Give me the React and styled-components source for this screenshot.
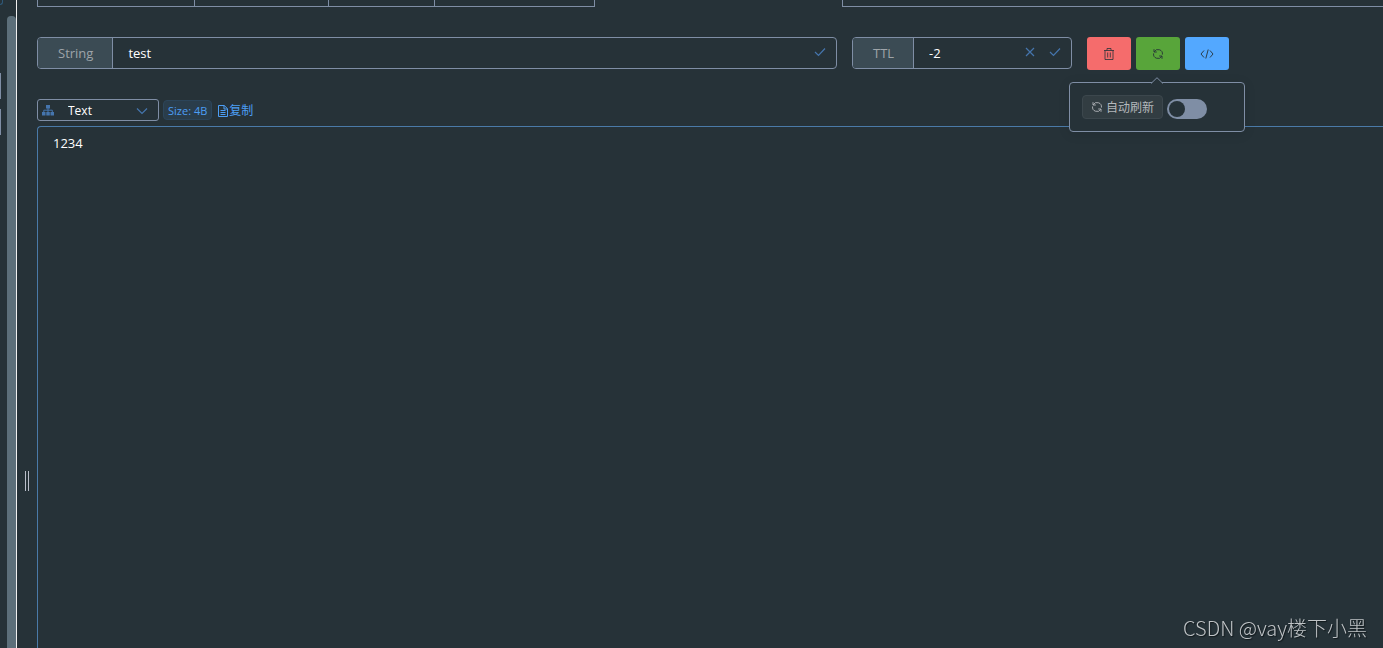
import React, { useState } from "react";
import styled, { createGlobalStyle } from "styled-components";

const GlobalStyle = createGlobalStyle`
  * {
    box-sizing: border-box;
  }

  html,
  body,
  #root {
    height: 100%;
  }

  body {
    margin: 0;
    overflow: hidden;
    background: #263238;
    color: #f3f3f4;
    font-family: "Open Sans", "Noto Sans", "Noto Sans CJK SC", sans-serif;
    font-size: 14px;
  }

  button,
  input,
  select,
  textarea {
    font-family: inherit;
    margin: 0;
  }
`;

const Page = styled.div`
  display: flex;
  height: 100%;
`;

const Sidebar = styled.aside`
  display: flex;
  justify-content: space-between;
  flex: none;
  width: 17px;
  border-right: 1px solid #f0f0f0;
`;

const SidebarEdge = styled.div`
  display: flex;
  flex-direction: column;
  gap: 10px;
  width: 3px;
`;

const EdgeTag = styled.div`
  height: 5px;
  margin-bottom: 58px;
  border: 1px solid #2e5878;
  border-width: 0 1px 1px 0;
  border-bottom-right-radius: 4px;
`;

const EdgeButton = styled.div`
  width: 1px;
  height: 26px;
  background: #7f8ea5;
`;

const ScrollThumb = styled.div`
  width: 9px;
  margin-top: 16px;
  border-radius: 4px 4px 0 0;
  background: #5c6f7a;
`;

const DragHandle = styled.div`
  flex: none;
  align-self: flex-end;
  width: 4px;
  height: 20px;
  margin: 0 8px 157px 8px;
  border: 1px solid #b9bec9;
  border-width: 0 1px;
`;

const Main = styled.main`
  flex: 1;
  min-width: 0;
  display: flex;
  flex-direction: column;
`;

const Tabs = styled.div`
  display: flex;
  height: 7px;
`;

const Tab = styled.div`
  width: ${(props) => props.$width}px;
  border: 1px solid #7f8ea5;
  border-width: 0 1px 1px 0;

  &:first-child {
    border-left-width: 1px;
  }
`;

const TabPanel = styled.div`
  flex: 1;
  margin-left: 247px;
  border: 1px solid #7f8ea5;
  border-width: 0 0 1px 1px;
`;

const KeyHeader = styled.header`
  display: flex;
  align-items: flex-start;
  gap: 15px;
  margin-top: 30px;
  padding-right: 154px;
`;

const InputGroup = styled.div`
  display: flex;
  align-items: center;
  flex: ${(props) => (props.$fixed ? "none" : "1")};
  width: ${(props) => (props.$fixed ? "220px" : "auto")};
  height: 32px;
  border: 1px solid #7f8ea5;
  border-radius: 4px;
  overflow: hidden;
`;

const InputLabel = styled.label`
  display: flex;
  align-items: center;
  height: 100%;
  padding: 0 19px 0 20px;
  border-right: 1px solid #7f8ea5;
  background: #3b4b54;
  color: #9ea4a9;
  font-size: 13px;
`;

const Input = styled.input`
  flex: 1;
  min-width: 0;
  height: 100%;
  padding: 0 15px;
  border: none;
  outline: none;
  background: transparent;
  color: #ffffff;
  font-size: 13px;
`;

const IconButton = styled.button`
  display: flex;
  align-items: center;
  justify-content: center;
  width: 25px;
  height: 30px;
  padding: 0 0 2px;
  border: none;
  background: transparent;
  color: #4575ad;

  &:last-child {
    margin-right: 4px;
  }
`;

const Actions = styled.div`
  display: flex;
  gap: 5px;
`;

const ActionButton = styled.button`
  display: flex;
  align-items: center;
  justify-content: center;
  width: 44px;
  height: 33px;
  padding: 0;
  border: none;
  border-radius: 3px;
  background: ${(props) => props.$color};
  color: #263238;
`;

const RefreshWrap = styled.div`
  position: relative;
`;

const Popover = styled.div`
  position: absolute;
  z-index: 2;
  top: 45px;
  left: -67px;
  display: flex;
  align-items: flex-start;
  gap: 4px;
  width: 176px;
  height: 50px;
  padding: 12px;
  border: 1px solid #7f8ea5;
  border-radius: 4px;
  background: #263238;
  box-shadow: 0 2px 12px rgba(0, 0, 0, 0.1);
`;

const Arrow = styled.svg`
  position: absolute;
  top: -6px;
  left: 81px;
`;

const RefreshTag = styled.label`
  display: flex;
  align-items: center;
  gap: 3px;
  height: 24px;
  padding: 0 8px;
  border: 1px solid #3c474d;
  border-radius: 4px;
  background: #323d42;
  color: #b4b8bc;
  font-size: 12px;
  white-space: nowrap;
`;

const Switch = styled.input`
  appearance: none;
  width: 40px;
  height: 20px;
  margin-top: 4px;
  border-radius: 10px;
  background: #7f8ea5;

  &::before {
    content: "";
    display: block;
    width: 16px;
    height: 16px;
    margin: 2px;
    border-radius: 50%;
    background: #263238;
  }

  &:checked::before {
    margin-left: 22px;
  }
`;

const FormatBar = styled.div`
  display: flex;
  align-items: center;
  gap: 4px;
  height: 22px;
  margin-top: 29px;
`;

const SelectBox = styled.div`
  display: flex;
  align-items: center;
  width: 122px;
  height: 22px;
  padding: 0 10px 0 4px;
  border: 1px solid #7f8ea5;
  border-radius: 3px;
  color: #4575ad;
`;

const Select = styled.select`
  flex: 1;
  appearance: none;
  padding: 0 0 0 14px;
  border: none;
  outline: none;
  background: transparent;
  color: #ffffff;
  font-size: 12px;
`;

const SizeTag = styled.span`
  height: 20px;
  padding: 0 4px;
  border: 1px solid #2c455a;
  border-radius: 4px;
  background: #2a3d4b;
  color: #4c9ef5;
  font-size: 11px;
  line-height: 19px;
`;

const CopyLink = styled.a`
  display: flex;
  align-items: center;
  gap: 1px;
  padding: 2px 0 0 2px;
  color: #4c9ef5;
  font-size: 12px;
  line-height: 20px;
  text-decoration: none;
`;

const ValueBox = styled.textarea`
  flex: 1;
  display: block;
  margin-top: 5px;
  padding: 6px 15px;
  border: 1px solid #4a7aa8;
  border-width: 1px 0 0 1px;
  border-top-left-radius: 4px;
  outline: none;
  resize: none;
  background: transparent;
  color: #ffffff;
  font-size: 13px;
  line-height: 20px;
`;

const Watermark = styled.div`
  position: fixed;
  right: 16px;
  bottom: 6px;
  color: #bfc3c6;
  font-family: "Noto Sans CJK SC", sans-serif;
  font-size: 20px;
  font-weight: 300;
  line-height: 28px;
  text-shadow: 1px 1px 1px #11181b;
`;

const CheckIcon = () => (
  <svg width="12" height="10" viewBox="0 0 12 10" fill="none" stroke="currentColor" strokeWidth="1.2">
    <path d="M1 5l3.5 3.5L11 1.5" />
  </svg>
);

const CloseIcon = () => (
  <svg width="10" height="10" viewBox="0 0 10 10" fill="none" stroke="currentColor" strokeWidth="1.2">
    <path d="M1 1l8 8M9 1L1 9" />
  </svg>
);

const TrashIcon = () => (
  <svg width="12" height="12" viewBox="0 0 12 12" fill="none" stroke="currentColor" strokeWidth="0.8">
    <path d="M1 2.5h10M4 2.5v-2h4v2M2 2.5v9h8v-9M4.7 4.5v5M7.3 4.5v5" />
  </svg>
);

const RefreshIcon = () => (
  <svg width="12" height="12" viewBox="0 0 12 12" fill="none" stroke="currentColor" strokeWidth="0.9">
    <path d="M2.2 3.8A4.4 4.4 0 0 1 10.4 6.6M9.8 8.2A4.4 4.4 0 0 1 1.6 5.4" />
    <path d="M2 1.2V4h2.8M10 10.8V8H7.2" />
  </svg>
);

const CodeIcon = () => (
  <svg width="14" height="12" viewBox="0 0 14 12" fill="none" stroke="currentColor" strokeWidth="0.9">
    <path d="M4 2.5L1 6l3 3.5M10 2.5L13 6l-3 3.5M8.2 1.5l-2.4 9" />
  </svg>
);

const SitemapIcon = () => (
  <svg width="12" height="11" viewBox="0 0 12 11" fill="currentColor">
    <path d="M4 0h4v3.5H4zM0 7h3.5v3.5H0zM4.3 7h3.5v3.5H4.3zM8.5 7H12v3.5H8.5z" />
    <path d="M6 3v4M1.8 7V5.2h8.5V7" fill="none" stroke="currentColor" />
  </svg>
);

const ArrowDownIcon = () => (
  <svg width="12" height="10" viewBox="0 0 12 10" fill="none" stroke="currentColor" strokeWidth="1.2">
    <path d="M1 3.5l5 5 5-5" />
  </svg>
);

const FileIcon = () => (
  <svg width="10" height="12" viewBox="0 0 10 12" fill="none" stroke="currentColor">
    <path d="M.5.5h5.7l3.3 3.2v7.8h-9zM6 .5V4h3.5M2.5 5.5h5M2.5 7.5h5M2.5 9.5h5" />
  </svg>
);

function App() {
  const [name, setName] = useState("test");
  const [ttl, setTtl] = useState("-2");
  const [value, setValue] = useState("1234");
  const [autoRefresh, setAutoRefresh] = useState(false);

  return (
    <>
      <GlobalStyle />
      <Page>
        <Sidebar>
          <SidebarEdge>
            <EdgeTag />
            <EdgeButton />
            <EdgeButton />
          </SidebarEdge>
          <ScrollThumb />
        </Sidebar>
        <DragHandle />
        <Main>
          <Tabs>
            <Tab $width={158} />
            <Tab $width={134} />
            <Tab $width={106} />
            <Tab $width={160} />
            <TabPanel />
          </Tabs>
          <KeyHeader>
            <InputGroup>
              <InputLabel htmlFor="key-name">String</InputLabel>
              <Input id="key-name" value={name} onChange={(e) => setName(e.target.value)} />
              <IconButton aria-label="Rename">
                <CheckIcon />
              </IconButton>
            </InputGroup>
            <InputGroup $fixed>
              <InputLabel htmlFor="key-ttl">TTL</InputLabel>
              <Input id="key-ttl" value={ttl} onChange={(e) => setTtl(e.target.value)} />
              <IconButton aria-label="Clear TTL" onClick={() => setTtl("-1")}>
                <CloseIcon />
              </IconButton>
              <IconButton aria-label="Save TTL">
                <CheckIcon />
              </IconButton>
            </InputGroup>
            <Actions>
              <ActionButton $color="#f56c6c" aria-label="Delete">
                <TrashIcon />
              </ActionButton>
              <RefreshWrap>
                <ActionButton $color="#58a53a" aria-label="Refresh">
                  <RefreshIcon />
                </ActionButton>
                <Popover>
                  <Arrow width="12" height="7" viewBox="0 0 12 7">
                    <path d="M0 6.5L6 .7l6 5.8" fill="#263238" stroke="#7f8ea5" />
                  </Arrow>
                  <RefreshTag htmlFor="auto-refresh">
                    <RefreshIcon />
                    自动刷新
                  </RefreshTag>
                  <Switch
                    id="auto-refresh"
                    type="checkbox"
                    checked={autoRefresh}
                    onChange={(e) => setAutoRefresh(e.target.checked)}
                  />
                </Popover>
              </RefreshWrap>
              <ActionButton $color="#53a8ff" aria-label="Code">
                <CodeIcon />
              </ActionButton>
            </Actions>
          </KeyHeader>
          <FormatBar>
            <SelectBox>
              <SitemapIcon />
              <Select aria-label="Format" defaultValue="Text">
                <option>Text</option>
                <option>Hex</option>
                <option>Json</option>
              </Select>
              <ArrowDownIcon />
            </SelectBox>
            <SizeTag>Size: 4B</SizeTag>
            <CopyLink href="#copy">
              <FileIcon />
              复制
            </CopyLink>
          </FormatBar>
          <ValueBox aria-label="Value" value={value} onChange={(e) => setValue(e.target.value)} />
        </Main>
      </Page>
      <Watermark>CSDN @vay楼下小黑</Watermark>
    </>
  );
}

export default App;
